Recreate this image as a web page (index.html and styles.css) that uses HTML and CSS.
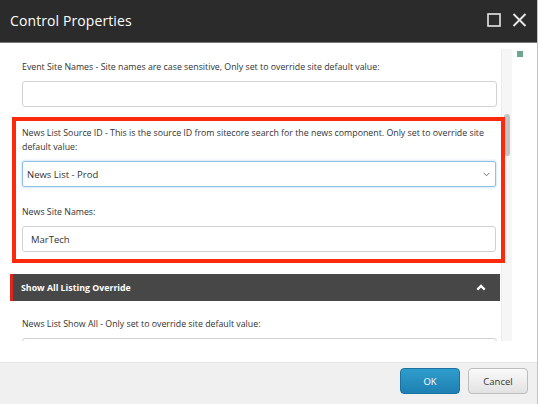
FILE: index.html
```html
<!DOCTYPE html>
<html>
<head>
<meta charset="utf-8">
<link rel="stylesheet" href="styles.css">
</head>
<body>
<div class="dialog">
  <div class="titlebar">
    <div class="title">Control Properties</div>
    <div class="title-icons">
      <svg class="ico" width="14" height="14" viewBox="0 0 14 14"><rect x="1" y="1" width="12" height="12" fill="none" stroke="#e8e8e8" stroke-width="1.6"/></svg>
      <svg class="ico" width="15" height="14" viewBox="0 0 15 14"><path d="M1.5 1 L13.5 13 M13.5 1 L1.5 13" stroke="#e8e8e8" stroke-width="1.9" fill="none"/></svg>
    </div>
  </div>
  <div class="body">
    <div class="main">
      <div class="scroll">
        <div class="content">
          <div class="group">
            <div class="label">Event Site Names - Site names are case sensitive, Only set to override site default value:</div>
            <div class="input"></div>
          </div>
          <div class="highlight">
            <div class="label">News List Source ID - This is the source ID from sitecore search for the news component. Only set to override site default value:</div>
            <div class="select">
              <span>News List - Prod</span>
              <svg width="7" height="5" viewBox="0 0 7 5"><path d="M0.6 0.8 L3.5 3.8 L6.4 0.8" stroke="#777" stroke-width="1" fill="none"/></svg>
            </div>
            <div class="label label-gap">News Site Names:</div>
            <div class="input"><span class="val">MarTech</span></div>
          </div>
          <div class="section">
            <span>Show All Listing Override</span>
            <svg width="10" height="7" viewBox="0 0 10 7"><path d="M1.3 5.6 L5 1.9 L8.7 5.6" stroke="#fff" stroke-width="2.2" fill="none"/></svg>
          </div>
          <div class="group group-last">
            <div class="label">News List Show All - Only set to override site default value:</div>
            <div class="input"></div>
          </div>
        </div>
        <div class="track"><div class="thumb"></div></div>
      </div>
    </div>
    <div class="side"><div class="dot"></div></div>
  </div>
  <div class="footer">
    <button class="btn btn-ok">OK</button>
    <button class="btn btn-cancel">Cancel</button>
  </div>
</div>
</body>
</html>
```

FILE: styles.css
```css
html, body {
  margin: 0;
  padding: 0;
  background: #ffffff;
}
body {
  font-family: "Open Sans", "Liberation Sans", sans-serif;
  width: 540px;
  height: 404px;
  overflow: hidden;
}
.dialog {
  width: 537px;
  height: 404px;
  border-right: 1px solid #c4c4c4;
  display: flex;
  flex-direction: column;
  background: #fff;
}
.titlebar {
  height: 43px;
  flex: none;
  background: #2b2b2b;
  border-bottom: 1px solid #7a7a7a;
  display: flex;
  align-items: center;
  justify-content: space-between;
  padding: 0 10px 0 10px;
  box-sizing: border-box;
}
.title {
  color: #ffffff;
  font-size: 14px;
  letter-spacing: 0.1px;
  margin-top: -2px;
}
.title-icons {
  display: flex;
  align-items: center;
  gap: 11px;
  margin-top: -2px;
}
.ico { display: block; }
.body {
  flex: none;
  height: 319px;
  display: flex;
}
.main {
  width: 512px;
  padding: 6px 0 21px 0;
  box-sizing: border-box;
}
.scroll {
  height: 292px;
  display: flex;
  overflow: hidden;
}
.content {
  width: 491px;
  flex: none;
  padding-left: 10px;
  box-sizing: content-box;
}
.track {
  width: 10px;
  flex: none;
  background: #f6f6f6;
  border-left: 1px solid #ececec;
  border-right: 1px solid #e6e6e6;
  position: relative;
}
.thumb {
  position: absolute;
  left: 2px;
  top: 65px;
  width: 6px;
  height: 42px;
  background: #c4c4c4;
  border-radius: 3px;
}
.side {
  width: 25px;
  padding: 8px 0 0 5px;
  box-sizing: border-box;
}
.dot {
  width: 6px;
  height: 6px;
  background: #6da98f;
}
.group {
  padding: 11px 4px 0 12px;
}
.label {
  font-size: 8.8px;
  line-height: 14px;
  color: #333;
}
.input {
  height: 26px;
  margin-top: 7px;
  border: 1px solid #d2d2d2;
  border-radius: 3px;
  box-sizing: border-box;
  display: flex;
  align-items: center;
  padding-left: 8px;
  background: #fff;
}
.val {
  font-size: 9.5px;
  color: #333;
}
.highlight {
  position: relative;
  z-index: 1;
  margin: 10px 0 0 2px;
  width: 493px;
  box-sizing: border-box;
  border: 4px solid #fb2a0c;
  padding: 5px 5px 7px 6px;
}
.select {
  height: 26px;
  margin-top: 7px;
  border: 1px solid #8fc0ea;
  border-radius: 2px;
  box-shadow: 0 0 3px rgba(102, 170, 230, 0.55);
  box-sizing: border-box;
  display: flex;
  align-items: center;
  justify-content: space-between;
  padding: 0 5px 0 4px;
  font-size: 9.5px;
  color: #333;
}
.label-gap {
  margin-top: 18px;
}
.section {
  margin-top: 11px;
  width: 490px;
  height: 27px;
  box-sizing: border-box;
  background: #474747;
  border-left: 3px solid #e0261a;
  display: flex;
  align-items: center;
  justify-content: space-between;
  padding: 0 14px 0 8px;
  color: #fff;
  font-size: 8.8px;
  font-weight: 700;
}
.group-last {
  padding-top: 16px;
}
.footer {
  flex: 1;
  background: #f0f0f0;
  border-top: 1px solid #e4e4e4;
  display: flex;
  justify-content: flex-end;
  align-items: flex-start;
  gap: 8px;
  padding: 5px 9px 0 0;
}
.btn {
  width: 60px;
  height: 26px;
  border-radius: 4px;
  font-family: "Open Sans", "Liberation Sans", sans-serif;
  font-size: 9.5px;
  padding: 0;
  cursor: pointer;
}
.btn-ok {
  background: linear-gradient(#2e9dcb, #1f80b3);
  border: 1px solid #1a72a1;
  color: #fff;
}
.btn-cancel {
  background: linear-gradient(#fafafa, #e2e2e2);
  border: 1px solid #bdbdbd;
  color: #333;
}
```
